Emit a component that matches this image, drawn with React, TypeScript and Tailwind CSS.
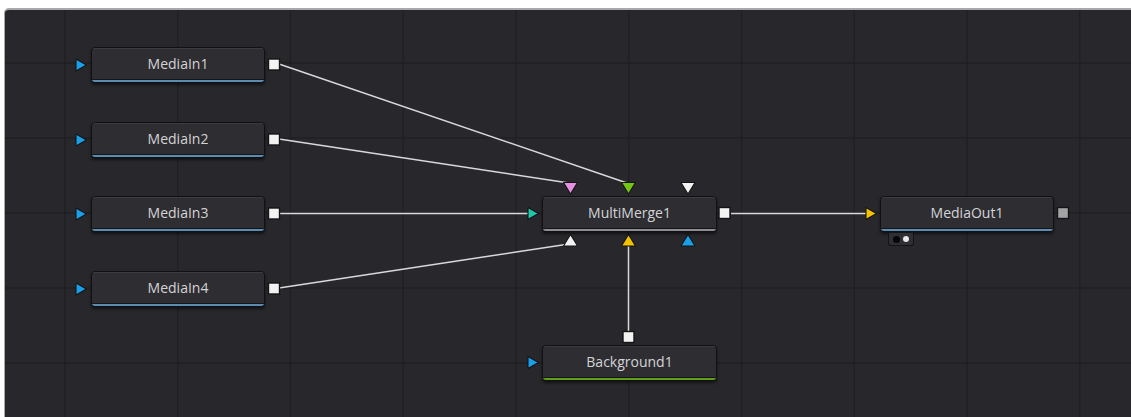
import React from "react";

type NodeProps = {
  label: string;
  left: number;
  top: number;
  width: number;
  bar: string;
};

function Node({ label, left, top, width, bar }: NodeProps) {
  return (
    <div
      className="absolute flex flex-col rounded-[4px] border border-[#111114] bg-[#2d2d32] shadow-[0_2px_3px_rgba(0,0,0,0.55)] overflow-hidden"
      style={{ left, top, width, height: 36 }}
    >
      <div className="flex flex-1 items-center justify-center border-t border-[#3b3b41] pb-[2px] text-[14px] font-medium text-[#d4d4d6] [font-family:'Open_Sans','Noto_Sans',sans-serif]">
        {label}
      </div>
      <div className="h-[3px] border-t border-[#151518]" style={{ background: bar }} />
    </div>
  );
}

const rightTri = (x: number, y: number, fill: string) =>
  `M${x - 5} ${y - 6} L${x + 5.5} ${y} L${x - 5} ${y + 6} Z|${fill}`;
const downTri = (x: number, y: number, fill: string) =>
  `M${x - 7} ${y - 5.5} L${x + 7} ${y - 5.5} L${x} ${y + 6} Z|${fill}`;
const upTri = (x: number, y: number, fill: string) =>
  `M${x - 7} ${y + 5.5} L${x + 7} ${y + 5.5} L${x} ${y - 6} Z|${fill}`;

export default function App() {
  const vx = Array.from({ length: 10 }, (_, k) => 65 + 112.75 * k);
  const hy = [63, 138, 213, 288, 363];
  const mediaIns = [
    { label: "MediaIn1", top: 47 },
    { label: "MediaIn2", top: 122 },
    { label: "MediaIn3", top: 196 },
    { label: "MediaIn4", top: 271 },
  ];
  const blue = "#1a9fe8";
  const tris: string[] = [
    ...mediaIns.map((m) => rightTri(81, m.top + 18, blue)),
    downTri(570.5, 188, "#e48fe0"),
    downTri(628.5, 188, "#74c414"),
    downTri(688, 188, "#f2f2f2"),
    upTri(570.5, 240.5, "#f2f2f2"),
    upTri(628.5, 240.5, "#f2c100"),
    upTri(688, 240.5, blue),
    rightTri(533, 213.5, "#1fc7a8"),
    rightTri(871, 213.5, "#f2c100"),
    rightTri(533, 362.5, blue),
  ];
  const squares = [
    ...mediaIns.map((m) => ({ x: 268.5, y: m.top + 12, f: "#f2f2f2" })),
    { x: 719, y: 207.5, f: "#f2f2f2" },
    { x: 1057.5, y: 207.5, f: "#a3a3a5" },
    { x: 623, y: 331.5, f: "#f2f2f2" },
  ];
  return (
    <div className="relative h-[417px] w-[1131px] overflow-hidden bg-white pl-[4px] pt-[8px]">
      <div className="h-full w-full rounded-tl-[5px] border-t-2 border-l border-[#a9a9ab] bg-[#28282c]" />
      <div className="absolute inset-0">
        <svg className="absolute left-0 top-0" width={1131} height={417}>
          <g stroke="#202023" strokeWidth={1.5}>
            {vx.map((x) => (
              <line key={x} x1={x} y1={10} x2={x} y2={417} />
            ))}
            {hy.map((y) => (
              <line key={y} x1={5} y1={y} x2={1131} y2={y} />
            ))}
          </g>
          <g stroke="#d9d9db" strokeWidth={1.5} fill="none">
            <line x1={279} y1={64} x2={627} y2={183} />
            <line x1={279} y1={139} x2={569} y2={183} />
            <line x1={279} y1={213.5} x2={528} y2={213.5} />
            <line x1={279} y1={288} x2={569} y2={244} />
            <line x1={731} y1={213.5} x2={866} y2={213.5} />
            <line x1={628.5} y1={331} x2={628.5} y2={246} />
          </g>
          {tris.map((t, i) => {
            const [d, f] = t.split("|");
            return (
              <path key={i} d={d} fill={f} stroke="#141416" strokeWidth={1.1} strokeLinejoin="round" />
            );
          })}
          {squares.map((s, i) => (
            <rect key={i} x={s.x} y={s.y} width={11} height={11} fill={s.f} stroke="#141416" strokeWidth={1.4} />
          ))}
        </svg>
        {mediaIns.map((m) => (
          <Node key={m.label} label={m.label} left={91} top={m.top} width={174} bar="#5b8db3" />
        ))}
        <Node label="MultiMerge1" left={542} top={196} width={175} bar="#8e8e92" />
        <Node label="MediaOut1" left={880} top={196} width={174} bar="#5b8db3" />
        <Node label="Background1" left={542} top={345} width={175} bar="#5e9f1c" />
        <div className="absolute left-[888px] top-[233px] flex h-[13px] w-[26px] items-center justify-center gap-[3px] rounded-b-[3px] border border-t-0 border-[#141416] bg-[#2e2e33]">
          <span className="h-[7px] w-[7px] rounded-full bg-[#050505]" />
          <span className="h-[6px] w-[6px] rounded-full bg-[#e8e8e8]" />
        </div>
      </div>
    </div>
  );
}
